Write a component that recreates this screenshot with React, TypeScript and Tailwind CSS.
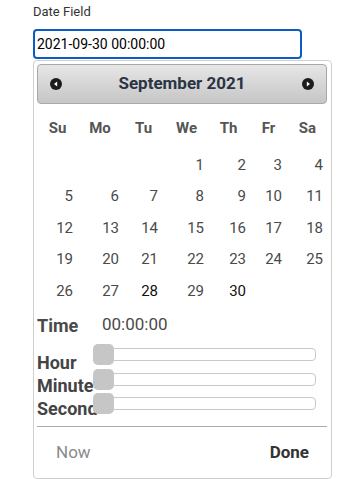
import React from "react";

const colW = "grid-cols-[41px_44px_43px_43px_41px_39px_39px]";
const padR = ["pr-[5px]", "pr-[3px]", "pr-[7px]", "pr-[4px]", "pr-[3px]", "pr-[6px]", "pr-[4px]"];
const heads = ["Su", "Mo", "Tu", "We", "Th", "Fr", "Sa"];

const weeks: (number | null)[][] = [
  [null, null, null, 1, 2, 3, 4],
  [5, 6, 7, 8, 9, 10, 11],
  [12, 13, 14, 15, 16, 17, 18],
  [19, 20, 21, 22, 23, 24, 25],
  [26, 27, 28, 29, 30, null, null],
];

function Arrow({ dir }: { dir: "left" | "right" }) {
  return (
    <svg width="12" height="12" viewBox="0 0 12 12">
      <circle cx="6" cy="6" r="6" fill="#1c1c1c" />
      {dir === "left" ? (
        <polygon points="4,6 7.2,3.6 7.2,8.4" fill="#fff" />
      ) : (
        <polygon points="8,6 4.8,3.6 4.8,8.4" fill="#fff" />
      )}
    </svg>
  );
}

function SliderRow() {
  return (
    <div className="relative h-[24.5px] flex items-center">
      <div className="ml-[1px] w-[222px] h-[13px] rounded-[4px] border border-[#c9c9c9] bg-white" />
      <div className="absolute left-0 top-[1.75px] w-[21px] h-[21px] rounded-[5px] bg-[#c6c6c6]" />
    </div>
  );
}

export default function App() {
  return (
    <div className="w-[340px] h-[479px] bg-white overflow-hidden font-['Roboto',_'Liberation_Sans',_sans-serif]">
      <div className="ml-[33px] w-[299px]">
        <div className="h-[29px] pt-[4px] text-[13px] leading-[16px] text-[#333]">Date Field</div>
        <div className="w-[269px] h-[30px] border-2 border-[#0b5cc4] rounded-[4px] pl-[2px] flex items-center text-[14px] text-black">
          2021-09-30 00:00:00
        </div>
        <div className="mt-[1px] h-[419px] border border-[#cfcfcf] rounded-[4px] pt-[3px] pl-[3px] pr-[4px]">
          <div className="h-[40px] rounded-[4px] border border-[#a8a8a8] bg-gradient-to-b from-[#e6e6e6] to-[#c6c6c6] flex items-center justify-between px-[12px]">
            <Arrow dir="left" />
            <div className="text-[17px] font-bold text-[#2b3443]">September 2021</div>
            <Arrow dir="right" />
          </div>
          <div className={`grid ${colW} mt-[9px] h-[30px] items-center text-[15px] font-bold text-[#555]`}>
            {heads.map((h) => (
              <div key={h} className="text-center">{h}</div>
            ))}
          </div>
          <div className="mt-[6px]">
            {weeks.map((w, i) => (
              <div key={i} className={`grid ${colW} h-[31.5px] items-center text-[15px]`}>
                {w.map((d, j) => (
                  <div
                    key={j}
                    className={`text-right ${padR[j]} ${d === 28 || d === 30 ? "text-[#111]" : "text-[#4a4a4a]"}`}
                  >
                    {d ?? ""}
                  </div>
                ))}
              </div>
            ))}
          </div>
          <div className="mt-[6.5px] h-[24px] flex items-center text-[#4a4a4a]">
            <div className="w-[65px] font-bold text-[18px]">Time</div>
            <div className="text-[17px]">00:00:00</div>
          </div>
          <div className="h-[89px] flex">
            <div className="w-[56px] pt-[13.5px] text-[18px] leading-[23px] font-bold text-[#444] whitespace-nowrap">
              <div>Hour</div>
              <div>Minute</div>
              <div>Second</div>
            </div>
            <div className="relative pt-[5.25px]">
              <SliderRow />
              <SliderRow />
              <SliderRow />
            </div>
          </div>
          <div className="h-px w-[290px] bg-[#ababab]" />
          <div className="h-[48px] pt-[4px] flex items-center justify-between pl-[19px] pr-[18px] text-[17px]">
            <div className="text-[#8a8a8a]">Now</div>
            <div className="font-bold text-[#333]">Done</div>
          </div>
        </div>
      </div>
    </div>
  );
}
